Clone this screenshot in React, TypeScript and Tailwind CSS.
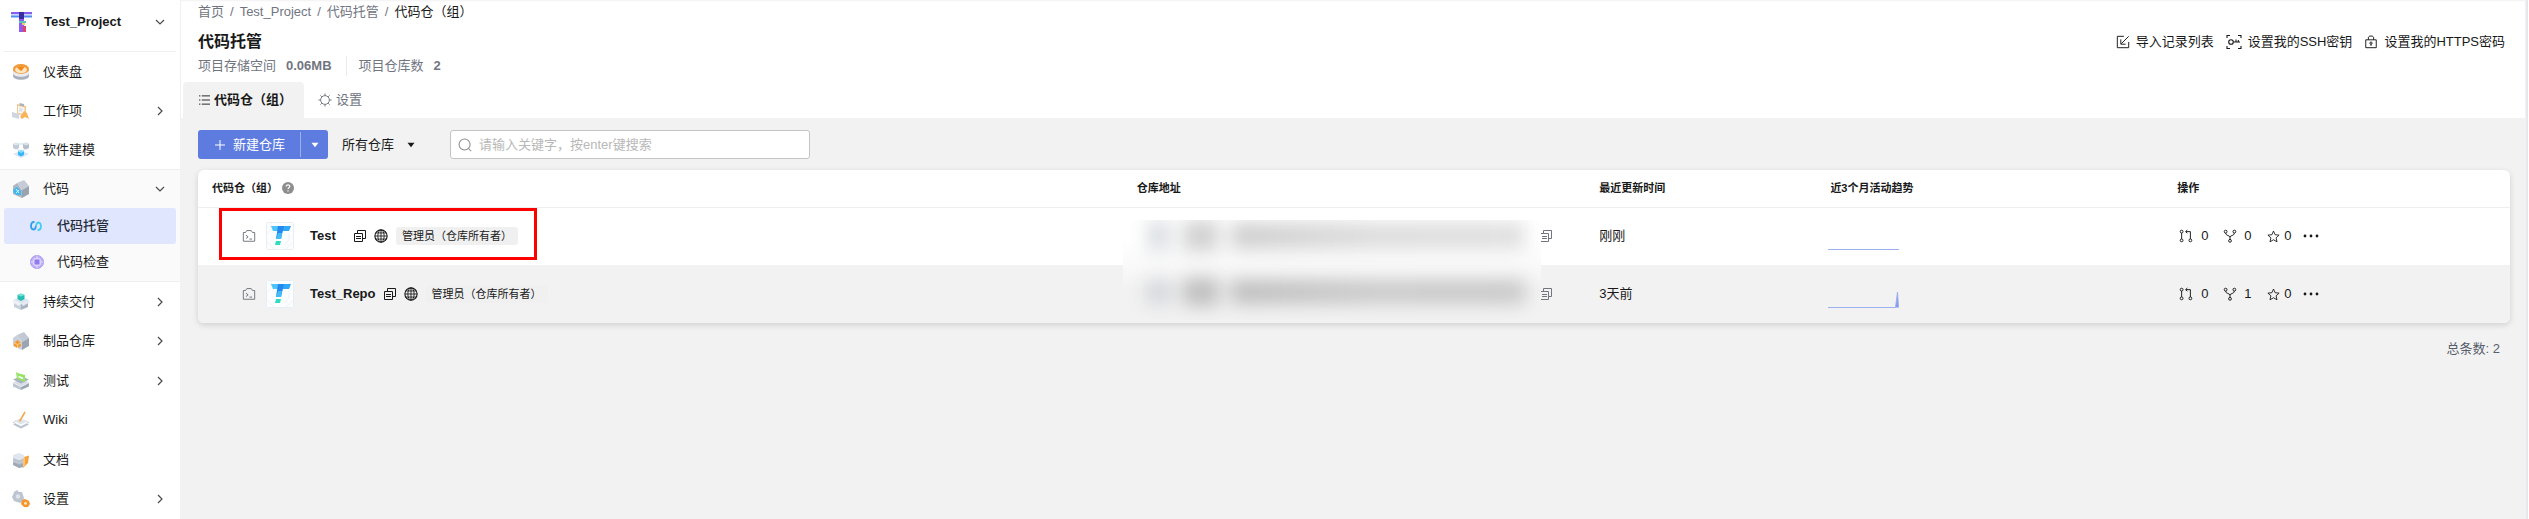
import type { ReactNode, SVGProps } from 'react';

type NavItem = {
  label: string;
  icon: ReactNode;
  expandable?: boolean;
};

type Repo = {
  name: string;
  role: string;
  updated: string;
  merges: number;
  forks: number;
  stars: number;
  trend: string;
  highlighted?: boolean;
};

const repos: Repo[] = [
  {
    name: 'Test',
    role: '管理员（仓库所有者）',
    updated: '刚刚',
    merges: 0,
    forks: 0,
    stars: 0,
    trend: 'M0 27.5H71',
    highlighted: true,
  },
  {
    name: 'Test_Repo',
    role: '管理员（仓库所有者）',
    updated: '3天前',
    merges: 0,
    forks: 1,
    stars: 0,
    trend: 'M0 27.5H67.5L69.5 12L70.5 27.5',
  },
];

function Icon({ children, ...props }: SVGProps<SVGSVGElement>) {
  return (
    <svg
      viewBox="0 0 16 16"
      fill="none"
      stroke="currentColor"
      aria-hidden="true"
      className="size-3.5 shrink-0"
      {...props}
    >
      {children}
    </svg>
  );
}

function NavIcon({ children }: { children: ReactNode }) {
  return (
    <svg viewBox="0 0 18 18" aria-hidden="true" className="size-[18px] shrink-0">
      {children}
    </svg>
  );
}

function Chevron({ down }: { down?: boolean }) {
  return (
    <svg viewBox="0 0 10 10" aria-hidden="true" className="ml-auto size-2.5 shrink-0" fill="none" stroke="#4a4a4a" strokeWidth="1.2">
      <path d={down ? 'M1 3L5 7L9 3' : 'M3 1L7 5L3 9'} />
    </svg>
  );
}

function Caret() {
  return (
    <svg viewBox="0 0 8 6" aria-hidden="true" className="h-1.5 w-2 shrink-0" fill="currentColor">
      <path d="M0.5 0.8H7.5L4 5.2Z" />
    </svg>
  );
}

function CopyIcon() {
  return (
    <svg viewBox="0 0 12 12" aria-hidden="true" className="size-3 shrink-0" fill="none" stroke="currentColor">
      <path d="M3.5 3V0.5H11.5V8.5H9" />
      <path d="M0.5 3.5H8.5V11.5H0.5ZM2 6.5H7M2 8.5H7" />
    </svg>
  );
}

function GlobeIcon() {
  return (
    <Icon strokeWidth="1">
      <circle cx="8" cy="8" r="7" strokeWidth="1.3" />
      <ellipse cx="8" cy="8" rx="3.6" ry="7" />
      <path d="M8 1V15M1 8H15M2 4.5H14M2 11.5H14" />
    </Icon>
  );
}

function TerminalIcon() {
  return (
    <Icon className="size-3.5 shrink-0 text-[#71757f]" strokeWidth="1.1">
      <path d="M1.5 4H4L5.5 1.8H10.5L12 4H14.5V14H1.5Z" />
      <path d="M4.5 7L7 9L4.5 11M8.5 11.5H11.5" />
    </Icon>
  );
}

function RepoLogo() {
  return (
    <svg viewBox="0 0 28 28" aria-hidden="true" className="size-7 shrink-0">
      <rect x="0.5" y="0.5" width="27" height="27" rx="1" fill="#fbfdfe" stroke="#e8eff4" />
      <path d="M1 20L8 27M1 12L5 8V1M20 27L27 20M18 23L23 18V11" stroke="#edf3f7" fill="none" />
      <path d="M5 4H15V9H7Z" fill="#4cc3fb" />
      <path d="M14 4H25L23 9H14Z" fill="#2fa8f8" />
      <path d="M12 4H18L15 17H10Z" fill="#2389ee" />
      <path d="M12 11H16L15 17H10Z" fill="#42bdf8" />
      <path d="M10 19H15L14 23H9Z" fill="#2fdcc0" />
    </svg>
  );
}

const dashboardIcon = (
  <NavIcon>
    <path d="M1 7V13C1 18 17 18 17 13V7Z" fill="#a9b0bc" />
    <path d="M1 8V10C1 15 17 15 17 10V8Z" fill="#e9edf3" />
    <ellipse cx="9" cy="6" rx="8" ry="5" fill="#f29a35" />
    <ellipse cx="9" cy="6.8" rx="6" ry="3.4" fill="#fde6c2" />
    <path d="M5 4.5L9 3L12.5 4L9.5 8L7.5 7Z" fill="#f08a1e" />
  </NavIcon>
);

const workIcon = (
  <NavIcon>
    <path d="M5 2L14 4V14L5 12Z" fill="#f6c88a" />
    <path d="M6 4L12.5 5.5V12L6 11Z" fill="#f5f7fa" />
    <path d="M7 6.5L11 7.5M7 8.5L10 9.2" stroke="#c3cbd7" strokeWidth="0.8" />
    <path d="M7.5 1L12 2V4.5L7.5 3.5Z" fill="#aab3c2" />
    <path d="M0 10L7 12V17L0 15Z" fill="#cfd6e2" />
    <path d="M8 15L12 9L15 11L17 17L13 15L10 17Z" fill="#f8b45b" />
  </NavIcon>
);

const modelIcon = (
  <NavIcon>
    <path d="M4 3H14M4 6L9 13L14 6" stroke="#a9dcf5" fill="none" strokeWidth="0.8" />
    <path d="M1 3L4 1.5L7 3V7L4 8.5L1 7Z" fill="#c3cad5" />
    <path d="M1 3L4 4.5L7 3L4 1.5Z" fill="#e3e8ef" />
    <path d="M11 3L14 1.5L17 3V7L14 8.5L11 7Z" fill="#b5bdca" />
    <path d="M11 3L14 4.5L17 3L14 1.5Z" fill="#dde3eb" />
    <path d="M1 13L9 9.5L17 13L9 17Z" fill="#d8e7f5" />
    <path d="M6 10.5L9 9L12 10.5V14L9 15.5L6 14Z" fill="#38b6f5" />
    <path d="M6 10.5L9 12L12 10.5L9 9Z" fill="#8edafc" />
  </NavIcon>
);

const codeIcon = (
  <NavIcon>
    <path d="M1 6L5 3L10 10V18L1 14Z" fill="#aeb6c2" />
    <path d="M5 3L12 0L17 6L10 10Z" fill="#c5ccd7" />
    <path d="M10 10L17 6V14L10 18Z" fill="#99a3b2" />
    <path d="M1 10L5 7L9 11V15L5 15L2 13Z" fill="#3fb8ee" />
    <path d="M4 9L7 13M7 10L4 13" stroke="#d6f3ff" />
  </NavIcon>
);

const deliveryIcon = (
  <NavIcon>
    <path d="M1 7L9 4L17 7L9 11Z" fill="#dde4ee" />
    <path d="M2 8L9 11V17L2 14Z" fill="#c8d0dc" />
    <path d="M16 8L9 11V17L16 14Z" fill="#aab4c3" />
    <path d="M5.5 2L9 0.5L12.5 2V6L9 8L5.5 6Z" fill="#25bdb4" />
    <path d="M5.5 2L9 3.5L12.5 2L9 0.5Z" fill="#79e2d6" />
    <path d="M0 9L2 7L9 10.5L7 13Z" fill="#eef2f7" />
    <path d="M18 9L16 7L9 10.5L11 13Z" fill="#e4eaf2" />
  </NavIcon>
);

const artifactIcon = (
  <NavIcon>
    <path d="M1 6L5 3L10 10V18L1 14Z" fill="#c9d0da" />
    <path d="M5 3L12 0L17 6L10 10Z" fill="#c2c9d4" />
    <path d="M10 10L17 6V14L10 18Z" fill="#9ba5b4" />
    <path d="M2 11L5.5 8L9 11V14L5.5 16L2 14Z" fill="#f59a32" />
    <path d="M2 11L5.5 12.5L9 11M5.5 12.5V16" stroke="#ffd9a5" fill="none" strokeWidth="0.8" />
  </NavIcon>
);

const testIcon = (
  <NavIcon>
    <path d="M1 11L9 15V18L1 14.5Z" fill="#bdc5d1" />
    <path d="M17 11L9 15V18L17 14.5Z" fill="#9ea8b6" />
    <path d="M1 10.5L9 6.5L17 10.5L9 14.5Z" fill="#d7dde6" />
    <path d="M1 7.5L9 4L17 7.5L9 11.5Z" fill="#a9b3c0" />
    <path d="M4 0L7 1.5L13 3V10L5 7Z" fill="#95e464" />
    <path d="M6.5 4.5L11 6.5" stroke="#fff" strokeWidth="1.4" />
  </NavIcon>
);

const wikiIcon = (
  <NavIcon>
    <path d="M1 13.5L8 10.5L17 13.5L9 17.5Z" fill="#b8c1ce" />
    <path d="M1 11.5L8 8.5L17 11.5L9 15.5Z" fill="#fff" stroke="#bcc5d2" strokeWidth="0.7" />
    <path d="M2 10L8 7.5L16 10L9 13.5Z" fill="#dfe5ee" />
    <path d="M7.5 10.5L13 1" stroke="#f5a94e" strokeWidth="1.6" />
  </NavIcon>
);

const docIcon = (
  <NavIcon>
    <path d="M1 12L7 10L12 13V16L7 17L1 14Z" fill="#9ea8b7" />
    <path d="M1 8.5L7 7L12 9V12L7 13.5L1 11Z" fill="#c0c8d4" />
    <path d="M1 4L7 2L12 4V8L7 10L1 7.5Z" fill="#e0e6ee" />
    <path d="M1 7.5L7 10L12 8M1 11L7 13.5L12 12" stroke="#aab3c1" fill="none" strokeWidth="0.8" />
    <path d="M12 6L17 4.5L16 12L11 17Z" fill="#f8a136" />
    <path d="M11 8L13 6V14L11 17Z" fill="#fbc47d" />
  </NavIcon>
);

const settingsIcon = (
  <NavIcon>
    <path d="M2 2L5 0L7 2L10 2L11 5L12 8L11 11L8 13L5 12L2 11L0 7L1 5Z" fill="#bcc5d1" />
    <circle cx="6" cy="6.5" r="2.2" fill="#dfe4eb" />
    <path d="M10 10L13 9L17 11L18 14L16 17L12 17L9 14Z" fill="#f4962c" />
    <circle cx="13.5" cy="13.2" r="1.5" fill="#fde2bd" />
  </NavIcon>
);

const topItems: NavItem[] = [
  { label: '仪表盘', icon: dashboardIcon },
  { label: '工作项', icon: workIcon, expandable: true },
  { label: '软件建模', icon: modelIcon },
];

const bottomItems: NavItem[] = [
  { label: '持续交付', icon: deliveryIcon, expandable: true },
  { label: '制品仓库', icon: artifactIcon, expandable: true },
  { label: '测试', icon: testIcon, expandable: true },
  { label: 'Wiki', icon: wikiIcon },
  { label: '文档', icon: docIcon },
  { label: '设置', icon: settingsIcon, expandable: true },
];

function NavLink({ item }: { item: NavItem }) {
  return (
    <a href="#" className="flex h-full items-center gap-[13px] pr-[15px] pl-3">
      {item.icon}
      <span>{item.label}</span>
      {item.expandable ? <Chevron /> : null}
    </a>
  );
}

function Sidebar() {
  return (
    <aside className="flex w-[180px] shrink-0 flex-col bg-white">
      <div className="mx-1 border-b border-[#efefef] pt-1 pb-[7px]">
        <button type="button" className="flex h-10 w-full items-center gap-[11px] pr-[11px] pl-[7px] pb-1 font-bold">
          <svg viewBox="0 0 22 22" aria-hidden="true" className="size-[22px] shrink-0">
            <path d="M0 1H21V3H0Z" fill="#8b5cf0" />
            <path d="M0 3H21V4.5H0Z" fill="#c9d3ff" />
            <path d="M0 4.5H21V6.5H0Z" fill="#4f8df5" />
            <path d="M8 1H13V9H8Z" fill="#3a2f9c" />
            <path d="M8 8H13V21H8Z" fill="#8f5cf2" />
            <path d="M8 10H15V12H8Z" fill="#57c7b0" />
            <path d="M11 12H14V14H11Z" fill="#f4c76a" />
            <path d="M12 15H15V21H12Z" fill="#e0446b" />
          </svg>
          <span>Test_Project</span>
          <Chevron down />
        </button>
      </div>
      <ul>
        {topItems.map((item) => (
          <li key={item.label} className="h-[39px]">
            <NavLink item={item} />
          </li>
        ))}
      </ul>
      <div className="border-y border-[#efefef] bg-[#fafafa] pb-px">
        <button type="button" className="flex h-[38px] w-full items-center gap-[13px] pr-[15px] pl-3">
          {codeIcon}
          <span>代码</span>
          <Chevron down />
        </button>
        <a href="#" aria-current="page" className="mx-1 flex h-9 items-center gap-[15px] rounded-[3px] bg-[#e0e6fd] pl-[26px] font-medium text-[#252b3a]">
          <svg viewBox="0 0 12 12" aria-hidden="true" className="size-3 shrink-0" fill="none" strokeWidth="1.8">
            <path d="M4.5 2H3.5C0.2 2 0.2 9.5 3.5 9.5C5.5 9.5 5.5 7.5 6 6" stroke="#2f9df0" />
            <path d="M7.5 10H8.5C11.8 10 11.8 2.5 8.5 2.5C6.5 2.5 6.5 4.5 6 6" stroke="#45cdf2" />
          </svg>
          代码托管
        </a>
        <a href="#" className="mx-1 flex h-9 items-center gap-[13px] pl-[26px]">
          <svg viewBox="0 0 14 14" aria-hidden="true" className="size-3.5 shrink-0" fill="none">
            <circle cx="7" cy="7" r="6.5" fill="#c0b1f7" stroke="#a493f0" />
            <circle cx="7" cy="7" r="4" stroke="#ded6fc" />
            <rect x="4.8" y="4.8" width="4.4" height="4.4" rx="1" fill="#8f7cea" />
            <path d="M7 0V4M7 10V14M0 7H4M10 7H14" stroke="#e4defd" strokeWidth="0.7" />
          </svg>
          代码检查
        </a>
      </div>
      <ul className="flex flex-1 flex-col">
        {bottomItems.map((item) => (
          <li key={item.label} className="min-h-9 flex-1">
            <NavLink item={item} />
          </li>
        ))}
      </ul>
    </aside>
  );
}

function PageHeader() {
  return (
    <header className="border-l border-[#f0f0f0] bg-white shadow-[inset_0_3px_2px_-2px_#f2f2f2]">
      <div className="pt-0.5 pr-5 pl-[17px]">
        <nav aria-label="Breadcrumb" className="flex h-5 items-center gap-1.5 text-[#71757f]">
          <a href="#">首页</a>
          <span>/</span>
          <a href="#">Test_Project</a>
          <span>/</span>
          <a href="#">代码托管</a>
          <span>/</span>
          <span className="text-[#191919]">代码仓（组）</span>
        </nav>
        <div className="mt-2 flex h-6 items-center justify-between">
          <h1 className="text-base font-bold">代码托管</h1>
          <div className="flex items-center gap-3">
            <a href="#" className="flex items-center gap-1.5">
              <Icon strokeWidth="1.1">
                <path d="M9 1.5H1.5V14.5H14.5V8" />
                <path d="M14.5 1.5L6 10M5.5 5V10.5H11" />
              </Icon>
              导入记录列表
            </a>
            <a href="#" className="flex items-center gap-1.5">
              <Icon className="size-4 shrink-0" strokeWidth="1.1">
                <path d="M1 4V1.5H4M12 1.5H15V4M1 12V14.5H4M12 14.5H15V12" />
                <circle cx="5" cy="8" r="2.3" />
                <path d="M7.5 8H14M10 8V5.5M12.3 8V6" />
              </Icon>
              设置我的SSH密钥
            </a>
            <a href="#" className="flex items-center gap-1.5">
              <Icon strokeWidth="1.1">
                <path d="M2 5.5H14V14.5H2ZM5 5.5V3C5 0.5 11 0.5 11 3V5.5" />
                <circle cx="8" cy="9.3" r="1.3" />
                <path d="M8 10.5V12.5" />
              </Icon>
              设置我的HTTPS密码
            </a>
          </div>
        </div>
        <dl className="mt-0.5 flex h-5 items-center gap-2.5 text-[#71757f]">
          <dt>项目存储空间</dt>
          <dd className="font-bold">0.06MB</dd>
          <dt className="ml-1 border-l border-[#ebebeb] pl-3">项目仓库数</dt>
          <dd className="font-bold">2</dd>
        </dl>
      </div>
      <div role="tablist" className="mt-1.5 flex pl-0.5">
        <button type="button" role="tab" aria-selected="true" className="flex h-9 items-center gap-1 rounded-t bg-[#f2f2f2] pr-3 pl-4 font-bold">
          <svg viewBox="0 0 12 12" aria-hidden="true" className="h-3 w-[11px] shrink-0" stroke="currentColor">
            <path d="M0 1.5H1.5M3 1.5H12M0 6H1.5M3 6H12M0 10.5H1.5M3 10.5H12" />
          </svg>
          代码仓（组）
        </button>
        <button type="button" role="tab" aria-selected="false" className="flex h-9 items-center gap-1 px-3.5 text-[#71757f]">
          <Icon strokeWidth="1.1">
            <circle cx="8" cy="8" r="5" />
            <path d="M8 0.5V3M8 13V15.5M0.5 8H3M13 8H15.5M2.8 2.8L4.4 4.4M11.6 11.6L13.2 13.2M2.8 13.2L4.4 11.6M11.6 4.4L13.2 2.8" />
          </Icon>
          设置
        </button>
      </div>
    </header>
  );
}

function Toolbar() {
  return (
    <div className="flex h-[29px] items-stretch">
      <div className="flex rounded-[3px] bg-[#5e7ce0] text-white">
        <button type="button" className="flex items-center gap-[7px] pr-[15px] pl-4">
          <svg viewBox="0 0 12 12" aria-hidden="true" className="size-3 shrink-0" stroke="currentColor">
            <path d="M6 1V11M1 6H11" />
          </svg>
          新建仓库
        </button>
        <button type="button" aria-label="更多" className="my-0.5 flex w-[28px] items-center justify-center border-l border-[#9eb0ec]">
          <Caret />
        </button>
      </div>
      <div className="relative ml-3.5 flex items-center">
        <select aria-label="仓库范围" className="appearance-none bg-transparent pr-5">
          <option>所有仓库</option>
        </select>
        <span className="pointer-events-none absolute right-0">
          <Caret />
        </span>
      </div>
      <label className="ml-[35px] flex w-[360px] items-center gap-[7px] rounded-[3px] border border-[#c4c4c4] bg-white px-[7px]">
        <Icon className="size-3.5 shrink-0 text-[#8d8d8d]" strokeWidth="1.2">
          <circle cx="7.5" cy="7.5" r="6.3" />
          <path d="M12 12L15 15" />
        </Icon>
        <input
          type="text"
          aria-label="搜索"
          placeholder="请输入关键字，按enter键搜索"
          className="min-w-0 flex-1 bg-transparent outline-none placeholder:text-[#b8b8b8]"
        />
      </label>
    </div>
  );
}

// Hides the clone addresses of both rows behind one frosted patch.
function MaskedAddresses() {
  return (
    <div className="absolute top-3 left-0 z-10 h-[100px] w-[418px] overflow-hidden bg-linear-to-b from-white from-20% via-[#fbfbfb] via-40% to-[#f2f2f2] to-70%">
      <div className="flex h-8 items-center gap-3 pr-4 pl-6 blur-[9px]">
        <span className="h-8 w-6 bg-[#dcdfe3]" />
        <span className="h-8 w-9 bg-[#d2d2d2]" />
        <span className="h-7 flex-1 bg-linear-to-r from-[#cfcfcf] via-[#dedede] to-[#e0e0e0]" />
      </div>
      <div className="mt-6 flex h-8 items-center gap-3 pr-4 pl-6 blur-[9px]">
        <span className="h-6 w-6 bg-[#d2d5da]" />
        <span className="h-7 w-9 bg-[#bfbfbf]" />
        <span className="h-6 flex-1 bg-linear-to-r from-[#bdbdbd] via-[#cacaca] to-[#c8c8c8]" />
      </div>
    </div>
  );
}

function RepoRow({ repo }: { repo: Repo }) {
  return (
    <tr className="h-[58px] even:bg-[#f2f2f2]">
      <td className="relative pl-11">
        {repo.highlighted ? (
          <span className="absolute top-0 left-[21px] h-[52px] w-[318px] border-3 border-[#ff0000]" />
        ) : null}
        <div className="flex items-center">
          <TerminalIcon />
          <span className="ml-2.5">
            <RepoLogo />
          </span>
          <a href="#" className="ml-4 min-w-9 font-bold">
            {repo.name}
          </a>
          <button type="button" aria-label="复制" className="ml-2">
            <CopyIcon />
          </button>
          <span className="ml-2">
            <GlobeIcon />
          </span>
          <span className="ml-2 rounded-[3px] bg-[#f0f0f0] px-1.5 text-[11px] leading-[18px]">{repo.role}</span>
        </div>
      </td>
      <td className="relative">
        {repo.highlighted ? <MaskedAddresses /> : null}
        <button type="button" aria-label="复制仓库地址" className="ml-[417px] block text-[#71757f]">
          <CopyIcon />
        </button>
      </td>
      <td className="px-3.5">{repo.updated}</td>
      <td className="px-3">
        <svg viewBox="0 0 71 28" aria-hidden="true" className="h-7 w-[71px]">
          <path d={repo.trend} fill="#7f98ec" stroke="#9db0ee" />
        </svg>
      </td>
      <td className="px-4">
        <div className="flex items-center">
          <a href="#" className="flex w-11 items-center gap-2">
            <Icon strokeWidth="1.1">
              <circle cx="3" cy="3" r="1.6" />
              <circle cx="3" cy="13" r="1.6" />
              <circle cx="13" cy="13" r="1.6" />
              <path d="M3 4.6V11.4M13 11.4V3H8M9.5 1.2L7.5 3L9.5 4.8" />
            </Icon>
            {repo.merges}
          </a>
          <a href="#" className="flex w-11 items-center gap-[7px]">
            <Icon strokeWidth="1.1">
              <circle cx="3" cy="3" r="1.6" />
              <circle cx="13" cy="3" r="1.6" />
              <circle cx="8" cy="13.5" r="1.6" />
              <path d="M3 4.6C3 8 8 7 8 9.5V11.9M13 4.6C13 8 8 7 8 9.5" />
            </Icon>
            {repo.forks}
          </a>
          <button type="button" className="flex items-center gap-1">
            <Icon className="size-[13px] shrink-0" strokeWidth="1.1">
              <path d="M8 1.3L10 5.8L14.9 6.3L11.2 9.6L12.3 14.5L8 12L3.7 14.5L4.8 9.6L1.1 6.3L6 5.8Z" />
            </Icon>
            {repo.stars}
          </button>
          <button type="button" aria-label="更多操作" className="ml-3">
            <svg viewBox="0 0 16 4" aria-hidden="true" className="h-1 w-4" fill="currentColor">
              <circle cx="2" cy="2" r="1.4" />
              <circle cx="8" cy="2" r="1.4" />
              <circle cx="14" cy="2" r="1.4" />
            </svg>
          </button>
        </div>
      </td>
    </tr>
  );
}

export default function App() {
  return (
    <div className="flex min-h-screen bg-[#f2f2f2] font-['Liberation_Sans','Noto_Sans_CJK_SC',sans-serif] text-[13px] leading-5 text-[#191919]">
      <Sidebar />
      <div className="min-w-0 flex-1">
        <PageHeader />
        <main className="pt-3 pr-[15px] pl-[18px]">
          <Toolbar />
          <div className="mt-[11px] overflow-hidden rounded-md bg-white shadow-[0_2px_6px_rgba(0,0,0,0.14)]">
            <table className="w-full table-fixed text-left">
              <thead className="text-[11px]">
                <tr className="h-[37px] border-b border-[#efefef]">
                  <th className="w-2/5 px-3.5">
                    <span className="flex items-center gap-1">
                      代码仓（组）
                      <svg viewBox="0 0 12 12" aria-hidden="true" className="size-3 shrink-0">
                        <circle cx="6" cy="6" r="6" fill="#8d8d8d" />
                        <path d="M4.2 4.6C4.2 2.2 7.9 2.4 7.8 4.5C7.7 5.7 6 5.7 6 7.1M6 8.3V9.5" fill="none" stroke="#fff" strokeWidth="1.2" />
                      </svg>
                    </span>
                  </th>
                  <th className="w-1/5 px-3.5">仓库地址</th>
                  <th className="w-1/10 px-3.5">最近更新时间</th>
                  <th className="w-[15%] px-3.5">近3个月活动趋势</th>
                  <th className="w-[15%] px-3.5">操作</th>
                </tr>
              </thead>
              <tbody>
                {repos.map((repo) => (
                  <RepoRow key={repo.name} repo={repo} />
                ))}
              </tbody>
            </table>
          </div>
          <p className="mt-4 pr-2.5 text-right text-[#575d6c]">总条数: 2</p>
        </main>
      </div>
      <div className="w-1 shrink-0 border-r border-white bg-linear-to-r from-[#f2f2f2] to-[#e2e3e8]" />
    </div>
  );
}
